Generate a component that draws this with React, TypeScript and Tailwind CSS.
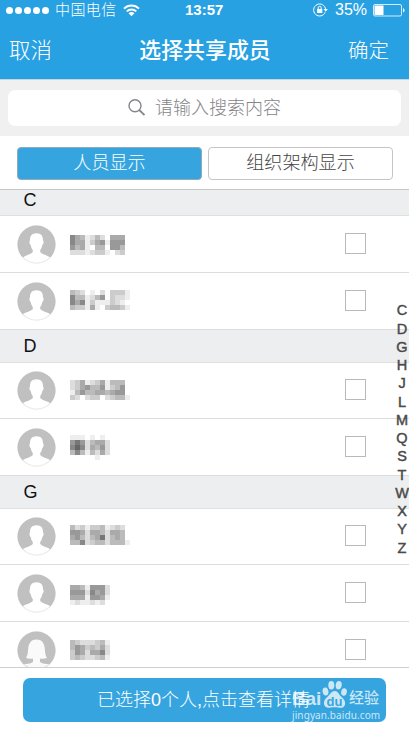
type Person = {
  id: string;
  female?: boolean;
  rowClass: string;
  maskClass: string;
  mask: string[];
};

type Section = {
  letter: string;
  headerClass: string;
  people: Person[];
};

// Each mask is a grid of 5px cells, one hex digit of grey per cell.
const sections: Section[] = [
  {
    letter: "C",
    headerClass: "h-[26px] pb-[4px]",
    people: [
      {
        id: "c1",
        rowClass: "h-[57px]",
        maskClass: "mt-[19px]",
        mask: ["8abedbdfaaa", "8aaeca9e999", "9baefbbf99b", "dddedccefdc"],
      },
      {
        id: "c2",
        rowClass: "h-[57px]",
        maskClass: "mt-[17px]",
        mask: ["bcdfefdfccce", "8bbedb9fcdde", "8a8eceeecdef", "bcceaefcbbce"],
      },
    ],
  },
  {
    letter: "D",
    headerClass: "h-[33px]",
    people: [
      {
        id: "d1",
        rowClass: "h-[56px]",
        maskClass: "mt-[17px]",
        mask: ["dcaedcaebbb", "dca9bb9ecb9", "eb9bbaaba99", "cdfdccfdcbbe"],
      },
      {
        id: "d2",
        rowClass: "h-[57px]",
        maskClass: "mt-[16px]",
        mask: ["eeefefe", "979dbaad", "868dab9d", "b8bebdad", "fffffef"],
      },
    ],
  },
  {
    letter: "G",
    headerClass: "h-[33px]",
    people: [
      {
        id: "g1",
        rowClass: "h-[56px]",
        maskClass: "mt-[16px]",
        mask: ["bdceccbedcd", "99adaabdaab", "a9bdba7dbab", "bb8dcbbdbbbe"],
      },
      {
        id: "g2",
        rowClass: "h-[57px]",
        maskClass: "mt-[20px]",
        mask: ["aabe999d", "999d8a9d", "aaae99ae", "edeededf"],
      },
      {
        id: "g3",
        female: true,
        rowClass: "h-[57px]",
        maskClass: "mt-[18px]",
        mask: ["bcdddcbe", "b9acbcad", "c9adaa8d", "cbcddcbe"],
      },
    ],
  },
];

const indexLetters = "CDGHJLMQSTWXYZ".split("");

function StatusBar() {
  return (
    <div className="flex h-5 items-center pr-1 pl-[6px]">
      <div className="flex w-[134px] items-center">
        <div className="flex gap-[2px]">
          {[0, 1, 2, 3, 4].map((dot) => (
            <i key={dot} className="size-[7px] rounded-full bg-white" />
          ))}
        </div>
        <span className="ml-[6px] text-[15px] leading-5 font-light tracking-[0.4px]">中国电信</span>
        <svg className="ml-[6px]" width="17" height="13" viewBox="0 0 17 13" fill="none" stroke="white" strokeWidth="1.9">
          <path d="M1 4.6c4.2-4.1 10.8-4.1 15 0M3.7 7.4c2.7-2.6 6.9-2.6 9.6 0" />
          <path d="M5.5 9.2c1.7-1.5 4.3-1.5 6 0L8.5 12.2Z" fill="white" stroke="none" />
        </svg>
      </div>
      <span className="ml-[45px] w-[45px] text-[15px] leading-5 font-bold">13:57</span>
      <svg className="ml-[83px]" width="15" height="14" viewBox="0 0 15 14" fill="none" stroke="white" strokeWidth="1">
        <path d="M12.2 9.2A6 6 0 1 1 12.6 6.5" />
        <path d="M10.6 6h4.2l-2.1 2.8Z" fill="white" stroke="none" />
        <rect x="4.1" y="6" width="5.2" height="4" fill="white" stroke="none" />
        <path d="M5.2 6V4.8a1.5 1.5 0 0 1 3 0V6" />
      </svg>
      <span className="ml-[7px] text-[16px] leading-5">35%</span>
      <svg className="ml-[6px] shrink-0" width="32" height="13" viewBox="0 0 32 13" fill="none">
        <rect x="0.5" y="0.5" width="28" height="11.5" rx="1.5" stroke="white" strokeOpacity="0.8" />
        <rect x="1.5" y="1.5" width="9" height="9.5" fill="white" />
        <path d="M30 4.2c2 .6 2 3.6 0 4.2Z" fill="white" />
      </svg>
    </div>
  );
}

function Avatar({ female }: { female?: boolean }) {
  return (
    <svg className="ml-[17px] shrink-0" width="39" height="39" viewBox="0 0 39 39">
      <circle cx="19.5" cy="19.5" r="19" fill="#c0c0c0" />
      {female ? (
        <path
          d="M19.5 8.6c-6.2 0-8.2 5-8.4 10.2-.2 3.8-.8 6.4-2.1 8.2 2.2.8 4.8 1 7 .6v3.4c-2.7 2-6.8 1.8-9.6 2.2 7.4 6.8 18.8 6.8 26.2 0-2.8-.4-6.9-.2-9.6-2.2v-3.4c2.2.4 4.8.2 7-.6-1.3-1.8-1.9-4.4-2.1-8.2-.2-5.2-2.2-10.2-8.4-10.2Z"
          fill="#fafafa"
        />
      ) : (
        <path
          d="M19.5 8.3c-4.7 0-6.7 3-6.5 7.2-1 .3-.7 3.7.7 4.4.4 2.2 1.1 3.8 2.1 5v2.2c-1.9 2.4-6.6 2.9-10.3 5.4a18.5 18.5 0 0 0 28 0c-3.7-2.5-8.4-3-10.3-5.4v-2.2c1-1.2 1.7-2.8 2.1-5 1.4-.7 1.7-4.1.7-4.4.2-4.2-1.8-7.2-6.5-7.2Z"
          fill="white"
        />
      )}
      <circle cx="19.5" cy="19.5" r="18.6" fill="none" stroke="#c0c0c0" strokeOpacity="0.45" strokeWidth="0.8" />
    </svg>
  );
}

function MaskedName({ mask, className }: { mask: string[]; className: string }) {
  return (
    <svg
      className={`ml-[14px] shrink-0 self-start ${className}`}
      width="60"
      height={mask.length * 5}
      shapeRendering="crispEdges"
    >
      {mask.map((line, y) =>
        line.split("").map((tone, x) => (
          <rect key={`${x}-${y}`} x={x * 5} y={y * 5} width="5" height="5" fill={`#${tone}${tone}${tone}`} />
        ))
      )}
    </svg>
  );
}

function PersonRow({ person }: { person: Person }) {
  return (
    <div className={`flex shrink-0 items-center border-b border-[#dcdcdc] bg-white ${person.rowClass}`}>
      <Avatar female={person.female} />
      <MaskedName mask={person.mask} className={person.maskClass} />
      <div className="mr-[43px] mb-[2px] ml-auto size-[21px] border border-[#b9b9b9]" />
    </div>
  );
}

function Watermark() {
  return (
    <div className="absolute top-[2px] right-[3px] w-[91px] text-white/75">
      <div className="flex h-[29px] items-end font-bold">
        <span className="text-[19px] leading-[20px] tracking-[-0.2px]">Bai</span>
        <svg className="ml-[1px] shrink-0" width="25" height="29" viewBox="0 0 25 29">
          <g fill="white" fillOpacity="0.75">
            <ellipse cx="3.5" cy="11.5" rx="2.9" ry="4" transform="rotate(-12 3.5 11.5)" />
            <ellipse cx="9.3" cy="5.2" rx="3" ry="4.2" />
            <ellipse cx="16.7" cy="5.2" rx="3" ry="4.2" transform="rotate(8 16.7 5.2)" />
            <ellipse cx="22" cy="12" rx="2.8" ry="3.8" transform="rotate(12 22 12)" />
            <path d="M12.8 11c-3.6 0-4.4 3.2-7 5.5C3 19 1.5 21 2 24c.6 3.6 3.8 4.2 6.5 3.6 2.8-.5 5.2-.5 8 0 2.9.6 6.2-.2 6.6-3.7.3-3-1.4-5-4-7.3-2.4-2.3-3-5.6-6.3-5.6Z" />
          </g>
          <text x="12.5" y="25.5" textAnchor="middle" fontSize="13" fontWeight="bold" fill="#36a5df">
            du
          </text>
        </svg>
        <span className="ml-[2px] text-[15px] leading-[22px] font-medium whitespace-nowrap">经验</span>
      </div>
      <div className="text-left font-['Noto_Sans',sans-serif] text-[10px] leading-[12px] tracking-[0.1px] whitespace-nowrap">
        jingyan.baidu.com
      </div>
    </div>
  );
}

export default function App() {
  return (
    <div className="relative flex h-[733px] w-[409px] flex-col overflow-hidden bg-white font-['Liberation_Sans','Noto_Sans_CJK_SC',sans-serif]">
      <header className="h-20 shrink-0 border-b border-[#c9d5dc] bg-[#28a1e3] text-white">
        <StatusBar />
        <div className="grid h-[62px] grid-cols-3 items-center px-[9px] pt-px">
          <span className="text-[21.5px] font-light">取消</span>
          <h1 className="text-center text-[21.9px] font-medium whitespace-nowrap">选择共享成员</h1>
          <span className="pr-[11px] text-right text-[20.5px] font-light">确定</span>
        </div>
      </header>

      <div className="h-14 shrink-0 bg-[#f0f0f0] px-2 pt-[10px]">
        <div className="flex h-9 items-center rounded-[7px] bg-white pl-[119px] text-[#858588]">
          <svg width="20" height="20" viewBox="0 0 20 20" fill="none" stroke="#85858a" strokeWidth="1.4">
            <circle cx="8" cy="7.7" r="6" />
            <path d="m12.3 12 5.2 5.2" strokeWidth="1.8" />
          </svg>
          <span className="ml-[8px] text-[18px] font-light">请输入搜索内容</span>
        </div>
      </div>

      <div className="flex h-[53px] shrink-0 gap-[6px] pt-[11px] pl-[17px] text-[18.1px] font-light">
        <button className="h-[33px] w-[185px] shrink-0 rounded-[4px] border border-[#8eabba] bg-[#36a5df] pt-px text-white">
          人员显示
        </button>
        <button className="h-[33px] w-[185px] shrink-0 rounded-[4px] border border-[#c5c5c5] bg-white pt-px text-[#444]">
          组织架构显示
        </button>
      </div>

      <main className="flex h-[478px] shrink-0 flex-col overflow-hidden border-t border-[#c5c7c9]">
        {sections.map((section) => (
          <section key={section.letter} className="shrink-0">
            <h2
              className={`flex items-center border-b border-[#dddfe1] bg-[#edeef0] pl-[23.5px] text-[18px] text-[#111] ${section.headerClass}`}
            >
              {section.letter}
            </h2>
            {section.people.map((person) => (
              <PersonRow key={person.id} person={person} />
            ))}
          </section>
        ))}
      </main>

      <footer className="flex-1 border-t border-[#cfcfcf] bg-white pt-[10px] pl-[23px]">
        <button className="relative h-11 w-[363px] rounded-[7px] bg-[#36a5df] text-white">
          <span className="block pt-px pl-[74px] text-left text-[18px] font-light">已选择0个人,点击查看详情</span>
          <Watermark />
        </button>
      </footer>

      <nav className="absolute top-[302px] right-0 w-[14px] text-[14.5px] text-[#4a4a4a] [-webkit-text-stroke:0.45px_#4a4a4a]">
        {indexLetters.map((letter) => (
          <div key={letter} className="flex h-[18.25px] items-center justify-center">
            {letter}
          </div>
        ))}
      </nav>
    </div>
  );
}
